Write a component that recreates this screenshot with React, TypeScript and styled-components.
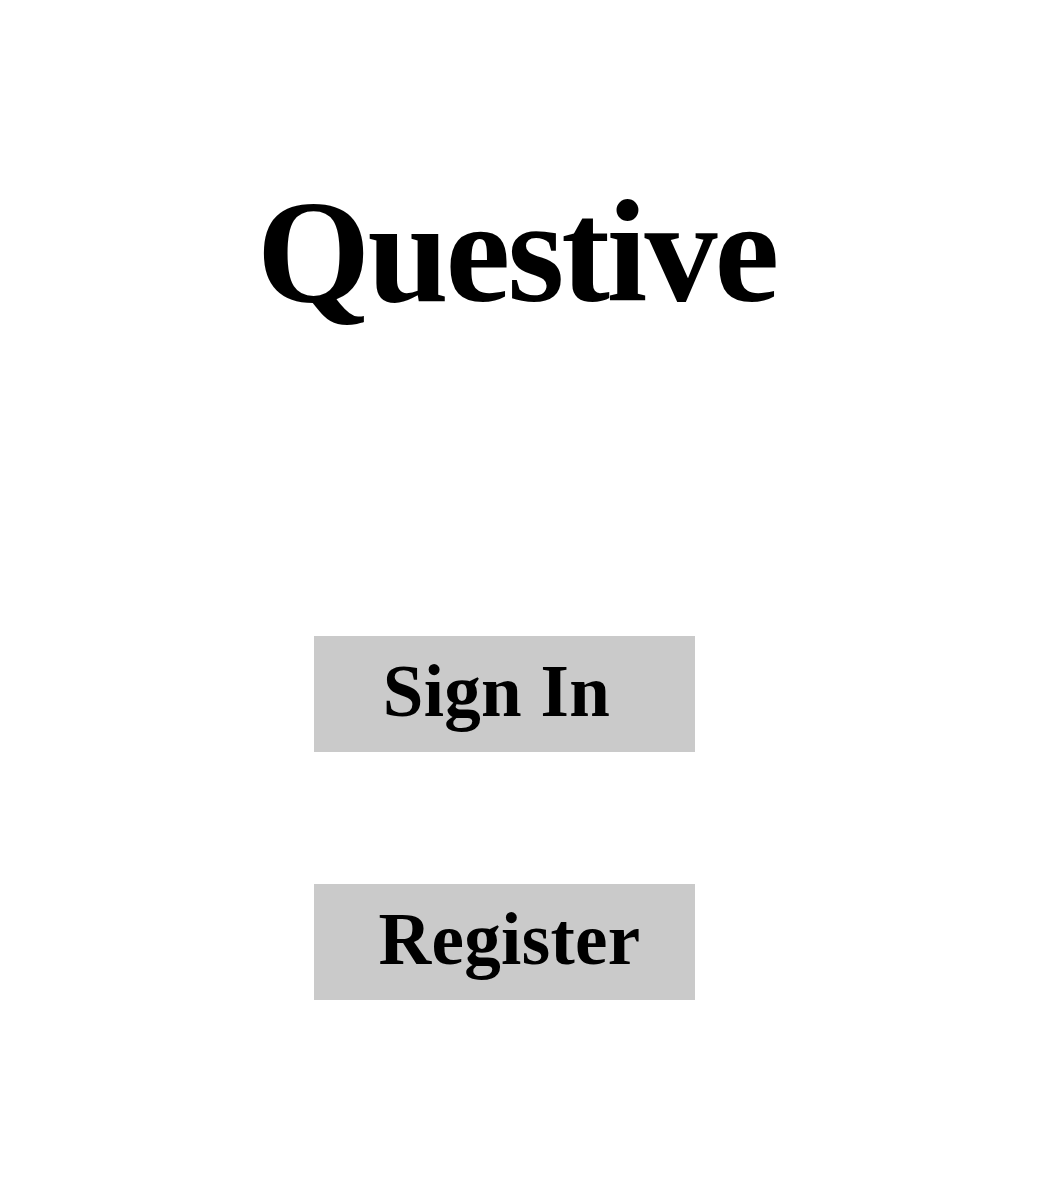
import React from "react";
import styled, { createGlobalStyle } from "styled-components";

const GlobalStyle = createGlobalStyle`
  html, body {
    margin: 0;
    padding: 0;
    background: #ffffff;
  }
  body {
    font-family: "Liberation Serif", "Times New Roman", serif;
  }
`;

const Page = styled.main`
  display: flex;
  flex-direction: column;
  align-items: center;
  width: 1057px;
  min-height: 1200px;
  padding-top: 179px;
  box-sizing: border-box;
`;

const Title = styled.h1`
  margin: 0 0 0 -24px;
  font-family: "Liberation Serif", "Times New Roman", serif;
  font-weight: 700;
  font-size: 146px;
  line-height: 146px;
  letter-spacing: -3px;
  color: #000;
`;

const Actions = styled.div`
  display: flex;
  flex-direction: column;
  align-items: center;
  gap: 132px;
  margin-top: 311px;
  margin-left: -48px;
`;

const ActionButton = styled.button<{ $offset?: number }>`
  display: flex;
  align-items: center;
  justify-content: center;
  width: 381px;
  height: 116px;
  padding: 0 ${(p) => Math.max(0, -(p.$offset ?? 0) * 2)}px 6px
    ${(p) => Math.max(0, (p.$offset ?? 0) * 2)}px;
  border: none;
  border-radius: 0;
  background: #cacaca;
  color: #000;
  font-family: "Liberation Serif", "Times New Roman", serif;
  font-weight: 700;
  font-size: 73px;
  line-height: 73px;
  letter-spacing: 0.3px;
  cursor: pointer;
`;

export default function App() {
  return (
    <>
      <GlobalStyle />
      <Page>
        <Title>Questive</Title>
        <Actions>
          <ActionButton $offset={-8}>Sign In</ActionButton>
          <ActionButton $offset={5}>Register</ActionButton>
        </Actions>
      </Page>
    </>
  );
}
